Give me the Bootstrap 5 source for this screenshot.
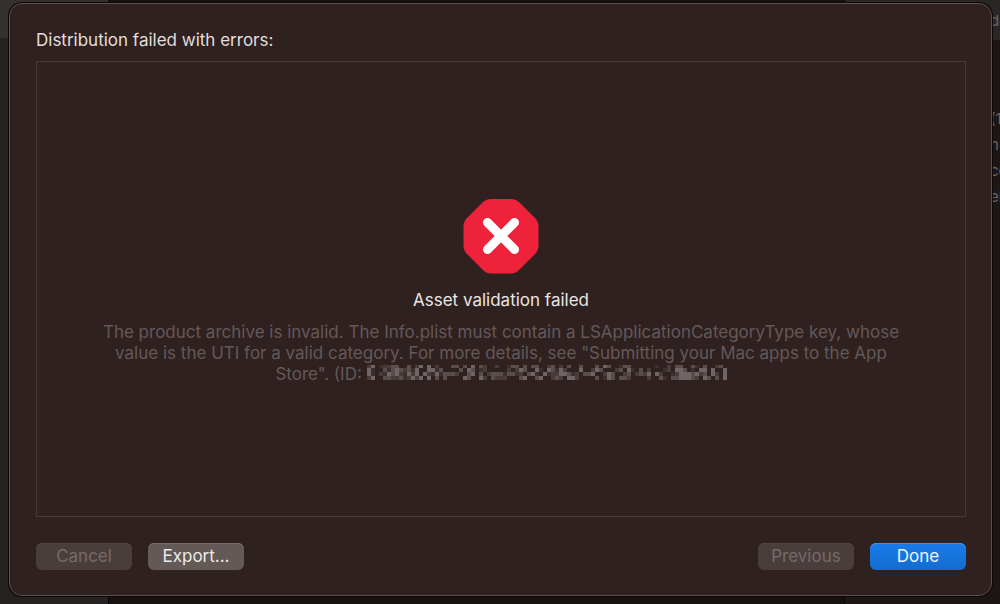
<!DOCTYPE html>
<html lang="en" data-bs-theme="dark">
<head>
<meta charset="utf-8">
<meta name="viewport" content="width=device-width, initial-scale=1">
<title>Distribution failed</title>
<link href="https://cdn.jsdelivr.net/npm/bootstrap@5.3.0/dist/css/bootstrap.min.css" rel="stylesheet">
<style>
  body { font-family: Inter, "Liberation Sans", sans-serif; font-size: 17px; line-height: 21px; background: #181313; }
  .app-window { z-index: 0; }
  .side-pane { width: 109px; background: #252322; border-right: 1px solid #080606; }
  .side-top { height: 38px; background: #33302f; }
  .main-pane { background: #171112; border-right: 1px solid #080606; }
  .info-pane { width: 155px; background: #1c1615; }
  .info-top { height: 40px; background: #2b2626; padding-top: 10px; margin-bottom: 66px; }
  .info-text { padding-left: 145px; color: #6b6463; font-size: 15px; line-height: 26px; white-space: nowrap; }
  .info-top .info-text { line-height: 21px; }
  .sheet { z-index: 1; padding: 3px 8px 8px 9px; }
  .sheet-body { background: #2f211f; border: 1px solid #5d504e; border-radius: 13px; box-shadow: 0 0 0 1px #0c0808; padding: 26px 25px 25px 26px; }
  .sheet-title { font-size: 17px; line-height: 21px; color: #e2dedd; margin-bottom: 10px; font-weight: 400; }
  .result-box { border: 1px solid #463937; padding: 4px 32px 0; }
  .result-title { font-size: 17px; line-height: 21px; color: #e9e6e5; margin: 16px 0 11px; font-weight: 400; }
  .result-text { color: #63595a; max-width: 800px; }
  .button-bar { padding-top: 26px; }
  .button-group { gap: 16px; }
  .sheet-btn { width: 96px; height: 27px; padding: 0; border: 0; border-radius: 6px; font-size: 17px; line-height: 25px; color: #eeebea; background: #635957; box-shadow: inset 0 1px #736967; }
  .sheet-btn:disabled { opacity: 1; color: #756b69; background: #493e3c; box-shadow: inset 0 1px #504543; }
  .sheet-btn.done-btn { color: #f2f6fd; background: linear-gradient(#1a7bea, #126dcf); box-shadow: inset 0 1px #3e90ef; }
  .redacted { vertical-align: baseline; }
</style>
</head>
<body>
<div class="position-relative min-vh-100 d-flex overflow-hidden">
  <div class="app-window position-absolute top-0 start-0 w-100 h-100 d-flex" aria-hidden="true">
    <div class="side-pane"><div class="side-top"></div></div>
    <div class="main-pane flex-grow-1"></div>
    <div class="info-pane overflow-hidden">
      <div class="info-top"><div class="info-text">da</div></div>
      <div class="info-text">(1</div>
      <div class="info-text">n</div>
      <div class="info-text">co</div>
      <div class="info-text">el</div>
    </div>
  </div>

  <div class="sheet position-relative d-flex flex-grow-1">
    <main class="sheet-body d-flex flex-column flex-grow-1">
      <h1 class="sheet-title">Distribution failed with errors:</h1>
      <section class="result-box flex-grow-1 d-flex flex-column align-items-center justify-content-center text-center">
        <svg width="76" height="76" viewBox="0 0 76 76" role="img" aria-label="Error">
          <path fill="#ee233b" d="M28 1H48Q53 1 57 5L71 19Q75.500 23 75.500 28V48Q75.500 53 71 57L57 71Q53 75.500 48 75.500H28Q23 75.500 19 71L5 57Q.5 53 .5 48V28Q.5 23 5 19L19 5Q23 1 28 1Z"/>
          <path stroke="#fff" stroke-width="9" stroke-linecap="round" d="M24.500 24.500 51.500 51.500M51.500 24.500 24.500 51.500"/>
        </svg>
        <h2 class="result-title">Asset validation failed</h2>
        <p class="result-text mb-0">The product archive is invalid. The Info.plist must contain a LSApplicationCategoryType key, whose<br>value is the UTI for a valid category. For more details, see "Submitting your Mac apps to the App<br>Store". (ID: <svg class="redacted" id="redacted" width="360" height="15" viewBox="0 1 360 15" role="img" aria-label="hidden identifier" shape-rendering="crispEdges"></svg></p>
      </section>
      <div class="button-bar d-flex justify-content-between">
        <div class="button-group d-flex">
          <button type="button" class="btn sheet-btn" disabled>Cancel</button>
          <button type="button" class="btn sheet-btn">Export...</button>
        </div>
        <div class="button-group d-flex">
          <button type="button" class="btn sheet-btn" disabled>Previous</button>
          <button type="button" class="btn sheet-btn done-btn">Done</button>
        </div>
      </div>
    </main>
  </div>
</div>
<script src="https://cdn.jsdelivr.net/npm/bootstrap@5.3.0/dist/js/bootstrap.bundle.min.js"></script>
<script>
  // Brightness of each mosaic cell that hides the identifier: 0 is clear, 4 is brightest.
  const cells = [
    '240122330030240402000330304032002001330303300230203003000304300133000000100203300310300230',
    '410031343231400441300003043012000002024300410431420004002430002304103020001204430104404004',
    '410214342142404214133320034030233313312034104122443120334002430023023240420012444342304204',
    '240033223124240403030000430042032220003400340023204420000301430332000020031033444320430304'
  ];
  const shades = ['', '#3c2f2d', '#483c3a', '#5a4e4d', '#6f6564'];
  const art = document.getElementById('redacted');
  cells.forEach((row, y) => [...row].forEach((level, x) => {
    if (level === '0') return;
    const cell = document.createElementNS('http://www.w3.org/2000/svg', 'rect');
    for (const [name, value] of Object.entries({ x: x * 4, y: y * 4, width: 4, height: 4, fill: shades[level] })) cell.setAttribute(name, value);
    art.append(cell);
  }));
</script>
</body>
</html>
